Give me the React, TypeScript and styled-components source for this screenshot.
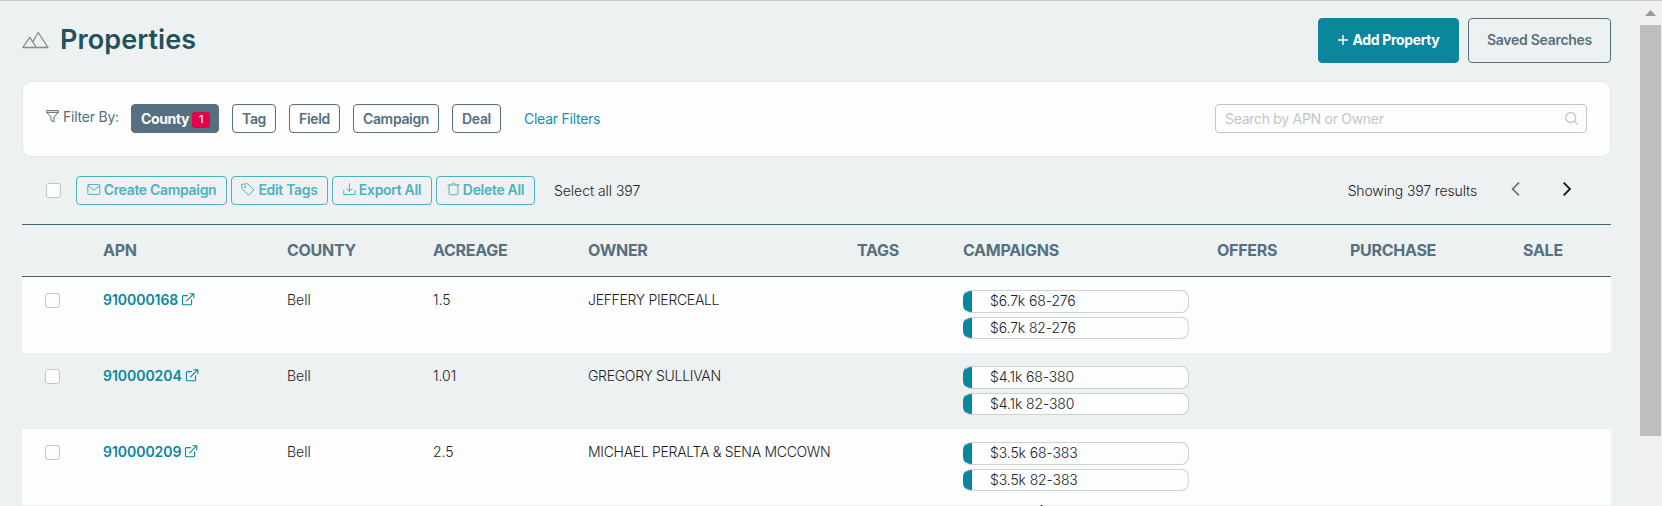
import React from "react";
import styled, { createGlobalStyle, css } from "styled-components";

const slate = "#56707f";
const line = "#44656f";
const teal = "#0a879d";
const aqua = "#4fb1bd";

const GlobalStyle = createGlobalStyle`
  *, *::before, *::after { box-sizing: border-box; }
  body {
    margin: 0;
    overflow: hidden;
    background: #eef1f2;
    color: #1d2325;
    font-family: Inter, "Liberation Sans", sans-serif;
    font-size: 14px;
    font-weight: 300;
    line-height: 20px;
  }
`;

const Window = styled.div`
  display: flex;
  height: 506px;
  overflow: hidden;
  border-top: 1px solid #c6c9cc;
`;

const Page = styled.main`
  width: 1638px;
  padding: 17px 27px 0 22px;
  flex: none;
`;

const Header = styled.header`
  display: flex;
  align-items: flex-start;
  height: 63px;
`;

const Title = styled.h1`
  flex: 1;
  margin: 5px 0 0 11px;
  color: #1f525b;
  font-size: 27px;
  line-height: 34px;
  font-weight: 600;
  letter-spacing: 0.08px;
`;

const TitleIcon = styled.svg`
  width: 27px;
  height: 18px;
  margin-top: 13px;
  flex: none;
`;

const HeaderButton = styled.button<{ $primary?: boolean; $width: number }>`
  width: ${(p) => p.$width}px;
  height: 45px;
  margin-left: 9px;
  padding: 0 0 2px;
  display: flex;
  align-items: center;
  justify-content: center;
  gap: 5px;
  border: 1px solid ${(p) => (p.$primary ? teal : slate)};
  border-radius: 4px;
  background: ${(p) => (p.$primary ? teal : "transparent")};
  color: ${(p) => (p.$primary ? "#fff" : slate)};
  font: ${(p) => (p.$primary ? 700 : 600)} 14px Inter, sans-serif;
  letter-spacing: ${(p) => (p.$primary ? -0.36 : -0.28)}px;
`;

const FilterCard = styled.section`
  display: flex;
  height: 76px;
  padding: 22px 23px;
  border: 1px solid #e2e7e8;
  border-radius: 9px;
  background: #fcfdfc;
`;

const FilterLabel = styled.div`
  display: flex;
  width: 85px;
  gap: 4px;
  color: ${slate};
  line-height: 26px;
  font-weight: 400;
  letter-spacing: -0.22px;
  white-space: nowrap;
  svg { margin-top: 6px; flex: none; }
`;

const FilterChip = styled.button<{ $active?: boolean; $width: number }>`
  width: ${(p) => p.$width}px;
  height: 29px;
  margin-right: 13px;
  padding: 0 0 0 ${(p) => (p.$active ? 1 : 0)}px;
  display: flex;
  align-items: center;
  justify-content: center;
  gap: 3px;
  border: 1px solid ${slate};
  border-radius: 4px;
  background: ${(p) => (p.$active ? slate : "transparent")};
  color: ${(p) => (p.$active ? "#fff" : slate)};
  font: ${(p) => (p.$active ? 700 : 600)} 14px Inter, sans-serif;
  letter-spacing: ${(p) => (p.$active ? -0.35 : -0.35)}px;
`;

const Badge = styled.span`
  width: 18px;
  height: 16px;
  margin-top: 2px;
  border-radius: 3px;
  background: #e6004c;
  color: #fff;
  font-size: 11px;
  font-weight: 500;
  line-height: 15px;
  text-align: center;
`;

const ClearLink = styled.a`
  margin-left: 10px;
  color: #1690b0;
  line-height: 29px;
  font-weight: 400;
  letter-spacing: -0.25px;
`;

const SearchBox = styled.label`
  display: flex;
  align-items: center;
  justify-content: space-between;
  width: 372px;
  height: 29px;
  margin-left: auto;
  padding: 0 8px 0 9px;
  border: 1px solid #c3c8c7;
  border-radius: 4px;
  color: #c3c6c7;
  font-weight: 400;
  letter-spacing: -0.29px;
`;

const Toolbar = styled.div`
  display: flex;
  align-items: center;
  height: 67px;
  padding-left: 24px;
`;

const Checkbox = styled.span`
  display: block;
  width: 15px;
  height: 15px;
  border: 1px solid #c2c5c7;
  border-radius: 3px;
  background: #fcfdfd;
  flex: none;
`;

const ActionGroup = styled.div`
  display: flex;
  gap: 4px;
  margin: 0 19px 0 15px;
`;

const ActionButton = styled.button<{ $width: number }>`
  width: ${(p) => p.$width}px;
  height: 29px;
  padding: 0 0 2px;
  display: flex;
  align-items: center;
  justify-content: center;
  gap: 3px;
  border: 1px solid ${aqua};
  border-radius: 4px;
  background: transparent;
  color: ${aqua};
  font: 600 14px Inter, sans-serif;
  letter-spacing: -0.32px;
  white-space: nowrap;
  svg { margin-top: -1px; flex: none; }
`;

const ToolbarText = styled.span<{ $end?: boolean }>`
  margin-left: ${(p) => (p.$end ? "auto" : 0)};
  letter-spacing: ${(p) => (p.$end ? -0.14 : -0.05)}px;
`;

const Pager = styled.div`
  display: flex;
  gap: 43px;
  padding: 0 40px 4px 34px;
`;

const Table = styled.div`
  width: 1589px;
`;

const columns = css`
  display: grid;
  grid-template-columns: 81px 184px 146px 155px 269px 106px 254px 133px 173px 88px;
`;

const HeadRow = styled.div`
  ${columns}
  height: 53px;
  border-top: 1px solid ${line};
  border-bottom: 1px solid ${line};
  color: ${slate};
  font-size: 16px;
  font-weight: 700;
  line-height: 51px;
  letter-spacing: -0.28px;
`;

const Row = styled.div<{ $shaded: boolean }>`
  ${columns}
  height: 76px;
  padding-top: 13px;
  background: ${(p) => (p.$shaded ? "#eef1f2" : "#fcfdfc")};
  white-space: nowrap;
`;

const SelectCell = styled.div`
  padding: 3px 0 0 23px;
`;

const OwnerCell = styled.span`
  letter-spacing: -0.3px;
`;

const ApnLink = styled.a`
  display: flex;
  gap: 3px;
  color: ${teal};
  font-weight: 600;
  letter-spacing: -0.04px;
  svg { margin-top: 3px; }
`;

const Pill = styled.div<{ $tall?: boolean }>`
  width: 226px;
  height: ${(p) => (p.$tall ? 23 : 22)}px;
  margin-bottom: 4px;
  display: flex;
  align-items: center;
  overflow: hidden;
  border: 1px solid #ced1d2;
  border-radius: 8px;
  background: linear-gradient(to right, ${teal} 9px, #fcfdfd 9px) border-box;
  padding: 0 0 ${(p) => (p.$tall ? 1 : 0)}px 26px;
  border-left-color: ${teal};
  letter-spacing: -0.13px;
`;

const Scrollbar = styled.div`
  width: 24px;
  padding: 9px 1px 0 2px;
  background: #f0f0f0;
`;

const ScrollUp = styled.svg`
  display: block;
  margin: 0 auto 9px;
`;

const ScrollThumb = styled.div`
  height: 411px;
  background: #bdbebd;
`;

const Cursor = styled.svg`
  position: fixed;
  left: 1040px;
  top: 505px;
`;

type GlyphProps = { w: number; h: number; stroke?: number; children: React.ReactNode };
const Glyph = ({ w, h, stroke = 1, children }: GlyphProps) => (
  <svg width={w} height={h} viewBox={`0 0 ${w} ${h}`} fill="none" stroke="currentColor"
    strokeWidth={stroke} strokeLinejoin="round" strokeLinecap="round">
    {children}
  </svg>
);

const rows = [
  { apn: "910000168", county: "Bell", acreage: "1.5", owner: "JEFFERY PIERCEALL", campaigns: ["$6.7k 68-276", "$6.7k 82-276"] },
  { apn: "910000204", county: "Bell", acreage: "1.01", owner: "GREGORY SULLIVAN", campaigns: ["$4.1k 68-380", "$4.1k 82-380"] },
  { apn: "910000209", county: "Bell", acreage: "2.5", owner: "MICHAEL PERALTA & SENA MCCOWN", campaigns: ["$3.5k 68-383", "$3.5k 82-383"] },
];

export default function App() {
  return (
    <>
      <GlobalStyle />
      <Window>
        <Page>
          <Header>
            <TitleIcon viewBox="0 0 27 18" fill="none" stroke="#80918f" strokeWidth="1.3" strokeLinejoin="round">
              <path d="M.8 16.5 7.8 6.4l6.5 10.1zM10.8 10.8 16.2 1.5l9.8 15H14.3" />
            </TitleIcon>
            <Title>Properties</Title>
            <HeaderButton $primary $width={141}>
              <Glyph w={10} h={12} stroke={1.4}><path d="M5 1.5v9M.6 6h8.8" /></Glyph>
              Add Property
            </HeaderButton>
            <HeaderButton $width={143}>Saved Searches</HeaderButton>
          </Header>

          <FilterCard>
            <FilterLabel>
              <Glyph w={13} h={13}><path d="M.6.6h11.8v1.6L8 7v4.9l-3-1.4V7L.6 2.2zM.8 2.4h11.4" /></Glyph>
              Filter By:
            </FilterLabel>
            <FilterChip $active $width={88}>County<Badge>1</Badge></FilterChip>
            <FilterChip $width={44}>Tag</FilterChip>
            <FilterChip $width={51}>Field</FilterChip>
            <FilterChip $width={86}>Campaign</FilterChip>
            <FilterChip $width={49}>Deal</FilterChip>
            <ClearLink>Clear Filters</ClearLink>
            <SearchBox>
              Search by APN or Owner
              <Glyph w={13} h={15} stroke={1.3}><circle cx="5.7" cy="6.5" r="5" /><path d="m9.3 10.1 3 3" /></Glyph>
            </SearchBox>
          </FilterCard>

          <Toolbar>
            <Checkbox />
            <ActionGroup>
              <ActionButton $width={151}>
                <Glyph w={14} h={11}><rect x=".8" y=".6" width="12" height="9.8" rx=".8" /><path d="m1.2 1.8 5.7 4.4 5.6-4.4" /></Glyph>
                Create Campaign
              </ActionButton>
              <ActionButton $width={97}>
                <Glyph w={14} h={13}><path d="M1 1.2 6.8.8l6.1 6.1-5.3 5.3L1.3 6z" /><circle cx="3.9" cy="3.9" r=".5" /></Glyph>
                Edit Tags
              </ActionButton>
              <ActionButton $width={100}>
                <Glyph w={13} h={13}><path d="M.8 7.5v4h11.4v-4M6.5.6v7.5M3.9 5.7l2.6 2.6 2.6-2.6" /></Glyph>
                Export All
              </ActionButton>
              <ActionButton $width={99}>
                <Glyph w={13} h={14}><path d="M.8 3h11.4M4 2.8C4.2.4 8.8.4 9 2.8M2.1 3.2v8.2q0 1.4 1.4 1.4h6q1.4 0 1.4-1.4V3.2" /></Glyph>
                Delete All
              </ActionButton>
            </ActionGroup>
            <ToolbarText>Select all 397</ToolbarText>
            <ToolbarText $end>Showing 397 results</ToolbarText>
            <Pager>
              <svg width="9" height="14" fill="none" stroke="#6c7476" strokeWidth="1.7"><path d="M8 .6 1.6 7 8 13.4" /></svg>
              <svg width="8" height="14" fill="none" stroke="#17191a" strokeWidth="1.9"><path d="M.6.6 7 7 .6 13.4" /></svg>
            </Pager>
          </Toolbar>

          <Table>
            <HeadRow>
              <span />
              <span>APN</span><span>COUNTY</span><span>ACREAGE</span><span>OWNER</span><span>TAGS</span>
              <span>CAMPAIGNS</span><span>OFFERS</span><span>PURCHASE</span><span>SALE</span>
            </HeadRow>
            {rows.map((r, i) => (
              <Row key={r.apn} $shaded={i % 2 === 1}>
                <SelectCell><Checkbox /></SelectCell>
                <ApnLink>
                  {r.apn}
                  <Glyph w={14} h={13} stroke={1.1}><path d="M6.5 2.6h-4q-1 0-1 1v7.1q0 1 1 1h7.1q1 0 1-1V6.9M5.6 7.8 12.6.8M8.8.7h4v4" /></Glyph>
                </ApnLink>
                <span>{r.county}</span>
                <span>{r.acreage}</span>
                <OwnerCell>{r.owner}</OwnerCell>
                <span />
                <div>
                  {r.campaigns.map((c, n) => <Pill key={c} $tall={n === 0}>{c}</Pill>)}
                </div>
              </Row>
            ))}
          </Table>
        </Page>
        <Scrollbar>
          <ScrollUp width="11" height="6"><path d="M0 6 5.5 0 11 6z" fill="#979a99" /></ScrollUp>
          <ScrollThumb />
        </Scrollbar>
      </Window>
      <Cursor width="3" height="1"><path d="M0 1 1.5 0 3 1z" fill="#000" /></Cursor>
    </>
  );
}
